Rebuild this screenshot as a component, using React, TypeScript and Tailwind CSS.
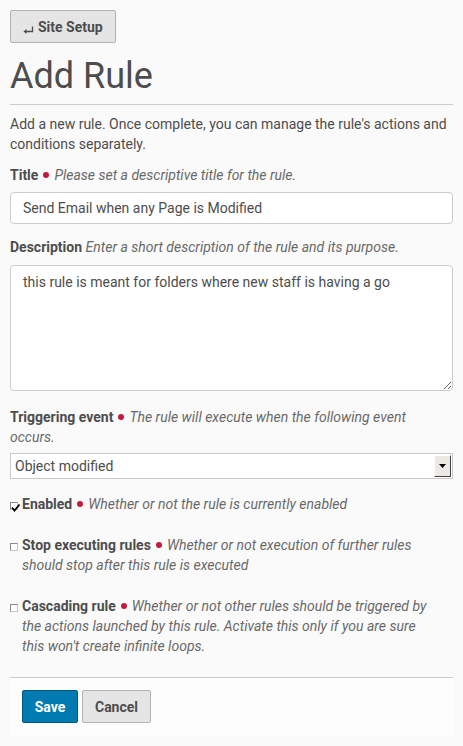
import React from "react";

function Dot() {
  return <span className="inline-block w-[6px] h-[6px] rounded-full bg-[#c4183c] mx-[5px] align-middle relative top-[-1px]" />;
}

function Box({ checked }: { checked?: boolean }) {
  return (
    <span className="relative w-[12px] shrink-0 h-[20px] flex items-start pt-[8px]">
      <span className="block w-[8px] h-[8px] border border-[#8a8a8a] border-b-[#c8c8c8] border-r-[#c8c8c8] bg-white" />
      {checked && (
        <svg className="absolute left-[1px] top-[9px]" width="10" height="10" viewBox="0 0 10 10">
          <path d="M1 4.5 L3.5 7.5 L8.5 1.5" stroke="#000" strokeWidth="1.8" fill="none" />
        </svg>
      )}
    </span>
  );
}

export default function App() {
  return (
    <div className="min-h-[746px] bg-[#fafafa] text-[#4d4d4d] font-['Roboto',sans-serif] text-[14px] leading-[20px] px-[10px] pt-[10px]">
      <button className="h-[33px] w-[106px] border border-[#b2b2b2] rounded-[2px] bg-[#e5e5e5] font-bold flex items-center pl-[12px] text-[14px] text-[#4d4d4d]">
        <svg width="11" height="9" viewBox="0 0 11 9" className="mt-[7px] mr-[4px]">
          <path d="M9.5 0.5 V5.5 H2" stroke="#4d4d4d" strokeWidth="1.3" fill="none" />
          <path d="M0.5 5.5 L3.5 3 L3.5 8 Z" fill="#4d4d4d" />
        </svg>
        Site Setup
      </button>
      <h1 className="mt-[13px] text-[36px] leading-[40px] font-normal">Add Rule</h1>
      <div className="mt-[8px] border-t border-[#cccccc]" />
      <p className="mt-[9px]">
        Add a new rule. Once complete, you can manage the rule's actions and conditions separately.
      </p>

      <div className="mt-[11px]">
        <span className="font-bold">Title</span>
        <Dot />
        <span className="italic text-[#696969]">Please set a descriptive title for the rule.</span>
      </div>
      <input
        readOnly
        value="Send Email when any Page is Modified"
        className="mt-[7px] block w-full h-[32px] border border-[#cccccc] rounded-[4px] bg-white px-[12px] text-[14px] text-[#4d4d4d] font-['Roboto',sans-serif] outline-none"
      />

      <div className="mt-[13px]">
        <span className="font-bold">Description</span>{" "}
        <span className="italic text-[#696969]">Enter a short description of the rule and its purpose.</span>
      </div>
      <textarea
        readOnly
        defaultValue="this rule is meant for folders where new staff is having a go"
        className="mt-[8px] block w-full h-[126px] border border-[#cccccc] rounded-[4px] bg-white px-[12px] py-[6px] text-[14px] leading-[20px] text-[#4d4d4d] font-['Roboto',sans-serif] outline-none"
      />

      <div className="mt-[16px]">
        <span className="font-bold">Triggering event</span>
        <Dot />
        <span className="italic text-[#696969]">
          The rule will execute when the following event
          <br />
          occurs.
        </span>
      </div>
      <div className="mt-[6px] h-[26px] border border-[#c8c8c8] bg-white flex items-center justify-between pl-[4px] pr-[1px]">
        <span className="text-[14px]">Object modified</span>
        <span className="w-[17px] h-[22px] bg-[#ece9e4] border border-t-white border-l-white border-b-[#404040] border-r-[#404040] flex items-center justify-center">
          <svg width="7" height="4" viewBox="0 0 7 4">
            <path d="M0 0 H7 L3.5 4 Z" fill="#000" />
          </svg>
        </span>
      </div>

      <div className="mt-[15px] flex">
        <Box checked />
        <div>
          <span className="font-bold">Enabled</span>
          <Dot />
          <span className="italic text-[#696969]">Whether or not the rule is currently enabled</span>
        </div>
      </div>

      <div className="mt-[21px] flex">
        <Box />
        <div>
          <span className="font-bold">Stop executing rules</span>
          <Dot />
          <span className="italic text-[#696969]">
            Whether or not execution of further rules
            <br />
            should stop after this rule is executed
          </span>
        </div>
      </div>

      <div className="mt-[21px] flex">
        <Box />
        <div>
          <span className="font-bold">Cascading rule</span>
          <Dot />
          <span className="italic text-[#696969]">
            Whether or not other rules should be triggered by
            <br />
            the actions launched by this rule. Activate this only if you are sure
            <br />
            this won't create infinite loops.
          </span>
        </div>
      </div>

      <div className="mt-[21px] border-t border-[#cccccc]" />
      <div className="bg-[#fdfdfd] h-[58px] px-[12px] pt-[12px] flex gap-[4px]">
        <button className="h-[33px] w-[56px] bg-[#007bb1] border border-[#00587f] rounded-[2px] text-white font-bold text-[14px]">
          Save
        </button>
        <button className="h-[33px] w-[69px] bg-[#e5e5e5] border border-[#b2b2b2] rounded-[2px] text-[#4d4d4d] font-bold text-[14px]">
          Cancel
        </button>
      </div>
    </div>
  );
}
